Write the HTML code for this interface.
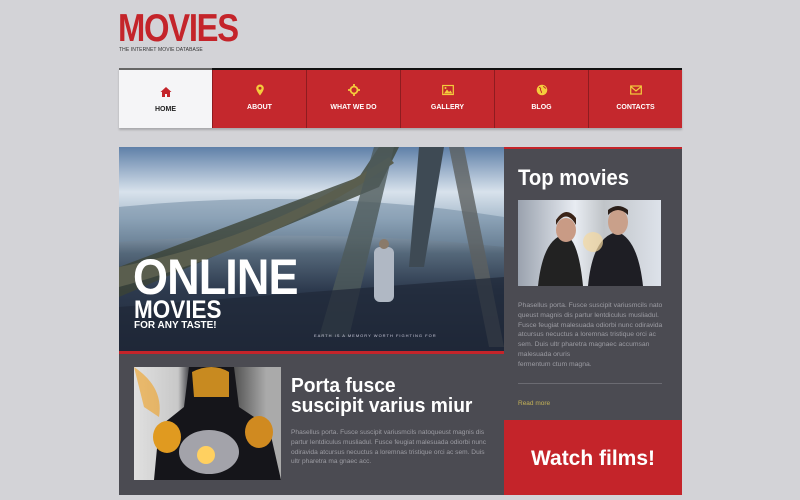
<!DOCTYPE html>
<html><head><meta charset="utf-8"><style>
*{margin:0;padding:0;box-sizing:border-box}
body{width:800px;height:500px;overflow:hidden;background:#d3d3d7;font-family:"Liberation Sans",sans-serif;position:relative}
.logo{position:absolute;left:118px;top:9px;color:#c4242a;font-size:39px;font-weight:bold;letter-spacing:-1.5px;line-height:40px;transform:scaleX(.84);transform-origin:left}
.tag{position:absolute;left:119px;top:47px;font-size:5px;color:#333;letter-spacing:.1px}
.nav{position:absolute;left:119px;top:68px;width:563px;height:60px;border-top:2px solid #111;display:flex;box-shadow:0 2px 2px rgba(0,0,0,.2)}
.nav div{flex:1;background:#c4282d;border-left:1px solid #8e1c20;color:#fff;font-size:7px;font-weight:bold;text-align:center;padding-top:14px}
.nav div:first-child{background:#f5f5f7;color:#222;border-left:none;border-top:2px solid #666;margin-top:-2px;padding-top:16px}
.nav svg{display:block;margin:0 auto 8px;width:12px;height:12px}
.hero{position:absolute;left:119px;top:147px;width:385px;height:207px;background:linear-gradient(180deg,#5f80a8 0%,#d8e2ec 22%,#a9bccd 35%,#55687a 52%,#2d3a4e 70%,#1e2638 100%);border-bottom:3px solid #c4242a;overflow:hidden}
.hero .t1{position:absolute;left:14px;top:105px;color:#fff;font-size:50px;font-weight:bold;letter-spacing:-1px;line-height:50px;transform:scaleX(.9);transform-origin:left}
.hero .t2{position:absolute;left:15px;top:150px;color:#fff;font-size:25px;font-weight:bold;line-height:26px;transform:scaleX(.9);transform-origin:left}
.hero .t3{position:absolute;left:15px;top:173px;color:#fff;font-size:10px;font-weight:bold}
.hero .t4{position:absolute;left:195px;top:186px;color:#ccd;font-size:4px;letter-spacing:1px}
.side{position:absolute;left:504px;top:147px;width:178px;height:273px;background:#4b4b52;border-top:2px solid #c4242a}
.side h2{color:#fff;font-size:22px;font-weight:bold;position:absolute;left:14px;top:16px;transform:scaleX(.92);transform-origin:left;white-space:nowrap}
.side .img{position:absolute;left:14px;top:51px;width:143px;height:86px;background:linear-gradient(90deg,#9aa2ae,#e8ecf2 40%,#c0c4c8 60%,#dde2ea);overflow:hidden}
.side p{position:absolute;left:14px;top:152px;width:150px;font-size:6.8px;line-height:9.8px;color:#9c9ca3}
.side hr{position:absolute;left:14px;top:234px;width:144px;border:0;border-top:1px solid #6b6b72}
.side .rm{position:absolute;left:14px;top:251px;font-size:6.5px;color:#c5b257}
.watch{position:absolute;left:504px;top:420px;width:178px;height:75px;background:#c4242a;color:#fff;font-size:21px;font-weight:bold;text-align:center;line-height:78px}
.bot{position:absolute;left:119px;top:354px;width:385px;height:141px;background:#4b4b52}
.bot .img{position:absolute;left:15px;top:13px;width:147px;height:113px;background:linear-gradient(90deg,#e0e0e0,#c8c8c8 30%,#1a1a20 40%,#333 60%,#aaa 90%);overflow:hidden}
.bot h3{position:absolute;left:172px;top:22px;color:#fff;font-size:20px;line-height:20px;font-weight:bold;transform:scaleX(.96);transform-origin:left;white-space:nowrap}
.bot p{position:absolute;left:172px;top:74px;width:200px;font-size:6.6px;line-height:9.8px;color:#9c9ca3}
</style></head><body>
<div class="logo">MOVIES</div>
<div class="tag">THE INTERNET MOVIE DATABASE</div>
<div class="nav">
<div><svg viewBox="0 0 12 12"><path d="M6 1L0.5 6h1.5v5h3V8h2v3h3V6h1.5z" fill="#c4242a"/></svg>HOME</div>
<div><svg viewBox="0 0 12 12"><path d="M6 0.5a3.8 3.8 0 0 0-3.8 3.8C2.2 7 6 11.5 6 11.5S9.8 7 9.8 4.3A3.8 3.8 0 0 0 6 .5zm0 5.3a1.5 1.5 0 1 1 0-3 1.5 1.5 0 0 1 0 3z" fill="#f4cc3c"/></svg>ABOUT</div>
<div><svg viewBox="0 0 12 12"><circle cx="6" cy="6" r="3.5" fill="none" stroke="#f4cc3c" stroke-width="1.8"/><path d="M6 0v3M6 9v3M0 6h3M9 6h3" stroke="#f4cc3c" stroke-width="1.8"/></svg>WHAT WE DO</div>
<div><svg viewBox="0 0 12 12"><rect x=".7" y="1.5" width="10.6" height="9" fill="none" stroke="#f4cc3c" stroke-width="1.2"/><path d="M2 9.5l3-4 2 2.5 1.5-1.5 1.8 3z" fill="#f4cc3c"/><circle cx="3.5" cy="4" r="1" fill="#f4cc3c"/></svg>GALLERY</div>
<div><svg viewBox="0 0 12 12"><circle cx="6" cy="6" r="5.3" fill="#f4cc3c"/><path d="M3 3.5c1.5 0 2 1 1.5 2S6 7 5.5 9M7.5 2c0 1.5 1.5 1.5 2.5 2.5" stroke="#c4282d" stroke-width="1" fill="none"/></svg>BLOG</div>
<div><svg viewBox="0 0 12 12"><rect x=".7" y="2" width="10.6" height="8" fill="none" stroke="#f4cc3c" stroke-width="1.2"/><path d="M.7 2.5L6 7l5.3-4.5" fill="none" stroke="#f4cc3c" stroke-width="1.2"/></svg>CONTACTS</div>
</div>
<div class="hero">
<svg width="385" height="207" style="position:absolute;left:0;top:0">
<path d="M0 60 Q200 40 385 70 L385 100 Q200 80 0 95z" fill="#6e88a0" opacity=".5"/>
<path d="M0 150 L140 90 L260 40 L280 0 L260 0 L240 30 L0 120z" fill="#3c4436" opacity=".8"/>
<path d="M0 120 Q150 90 270 10 L275 16 Q150 100 0 140z" fill="#5a5e4e"/>
<path d="M255 0 L275 0 L230 190 L200 190z" fill="#4e5a5a" opacity=".8"/>
<path d="M300 0 L325 0 L305 120 L290 120z" fill="#3e4a54"/>
<path d="M330 0 L345 0 L385 200 L370 200z" fill="#5c6060" opacity=".8"/>
<path d="M0 160 L385 130 L385 207 L0 207z" fill="#1f2838" opacity=".7"/>
<rect x="255" y="100" width="20" height="55" rx="6" fill="#b0b8c4"/><circle cx="265" cy="97" r="5" fill="#8a7a6a"/>
</svg>
<div class="t1">ONLINE</div><div class="t2">MOVIES</div><div class="t3">FOR ANY TASTE!</div>
<div class="t4">EARTH IS A MEMORY WORTH FIGHTING FOR</div>
</div>
<div class="side"><h2>Top movies</h2>
<div class="img"><svg width="143" height="86"><path d="M20 86 Q25 40 45 35 Q60 35 65 86z" fill="#222"/><ellipse cx="48" cy="30" rx="10" ry="12" fill="#c99b85"/><path d="M38 25 Q48 8 58 25 L58 18 Q48 5 38 20z" fill="#3a2418"/><path d="M70 86 Q75 35 100 32 Q120 40 125 86z" fill="#1e1e24"/><ellipse cx="100" cy="22" rx="10" ry="13" fill="#c9a08a"/><path d="M90 15 Q100 5 110 15 L110 10 Q100 2 90 10z" fill="#2a1e18"/><circle cx="75" cy="42" r="10" fill="#f5d9a0" opacity=".7"/></svg></div>
<p>Phasellus porta. Fusce suscipit variusmcils nato queust magnis dis partur lentdiculus musliadul. Fusce feugiat malesuada odiorbi nunc odiravida atcursus necuctus a loremnas tristique orci ac sem. Duis ultr pharetra magnaec accumsan malesuada oruris<br>fermentum ctum magna.</p>
<hr><div class="rm">Read more</div></div>
<div class="watch">Watch films!</div>
<div class="bot">
<div class="img"><svg width="147" height="113"><path d="M0 0 Q30 20 25 50 L10 40z" fill="#f0a020" opacity=".6"/><path d="M55 0 L100 0 L105 40 L135 60 L147 113 L20 113 L25 60 L50 40z" fill="#15151a"/><path d="M58 5 Q78 -5 95 5 L95 30 L60 30z" fill="#c88a20"/><ellipse cx="75" cy="85" rx="30" ry="22" fill="#e0e0e8" opacity=".7"/><circle cx="72" cy="88" r="9" fill="#ffd060"/><ellipse cx="33" cy="70" rx="14" ry="16" fill="#e09a20"/><ellipse cx="125" cy="65" rx="14" ry="16" fill="#d08a20"/></svg></div>
<h3>Porta fusce<br>suscipit varius miur</h3>
<p>Phasellus porta. Fusce suscipit variusmcils natoqueust magnis dis partur lentdiculus musliadul. Fusce feugiat malesuada odiorbi nunc odiravida atcursus necuctus a loremnas tristique orci ac sem. Duis ultr pharetra ma gnaec acc.</p>
</div>
</body></html>
